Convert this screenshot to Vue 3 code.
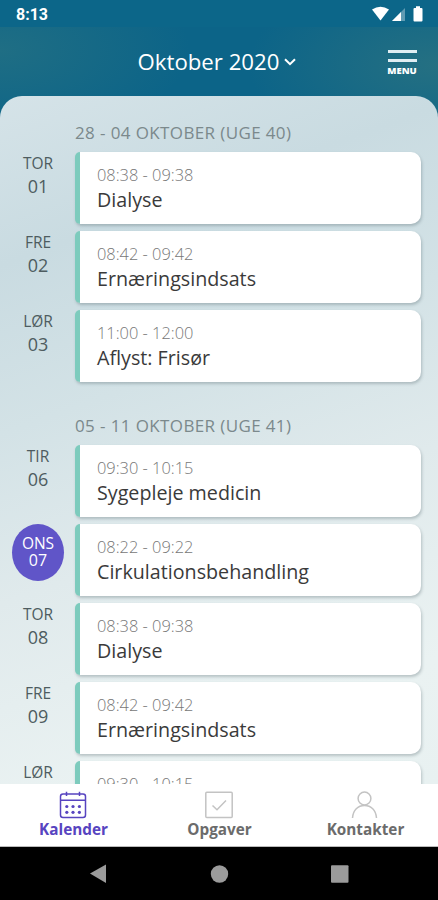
<script setup>
const weeks = [
  {
    title: '28 - 04 OKTOBER (UGE 40)',
    events: [
      { day: 'TOR', date: '01', time: '08:38 - 09:38', name: 'Dialyse' },
      { day: 'FRE', date: '02', time: '08:42 - 09:42', name: 'Ernæringsindsats' },
      { day: 'LØR', date: '03', time: '11:00 - 12:00', name: 'Aflyst: Frisør' }
    ]
  },
  {
    title: '05 - 11 OKTOBER (UGE 41)',
    events: [
      { day: 'TIR', date: '06', time: '09:30 - 10:15', name: 'Sygepleje medicin' },
      { day: 'ONS', date: '07', time: '08:22 - 09:22', name: 'Cirkulationsbehandling', today: true },
      { day: 'TOR', date: '08', time: '08:38 - 09:38', name: 'Dialyse' },
      { day: 'FRE', date: '09', time: '08:42 - 09:42', name: 'Ernæringsindsats' },
      { day: 'LØR', date: '10', time: '09:30 - 10:15', name: 'Sygepleje medicin' }
    ]
  }
]
</script>

<template>
  <div class="screen">
    <div class="status">
      <span class="clock">8:13</span>
      <svg class="status-icons" width="54" height="18" viewBox="0 0 54 18">
        <path d="M2 4.500Q10.500-.8 19 4.500L10.500 15.500Z" fill="#fff" />
        <path d="M22 16L35 3V16Z" fill="#fff" fill-opacity=".35" />
        <path d="M22 16L31 7V16Z" fill="#fff" />
        <path d="M44.500 3h1.500V1.200h4V3H51.500q1 0 1 1V15.500q0 1-1 1h-7q-1 0-1-1V4q0-1 1-1Z" fill="#fff" />
      </svg>
    </div>
    <header class="header">
      <div class="month">
        <span>Oktober 2020</span>
        <svg width="12" height="8" viewBox="0 0 12 8" fill="none" stroke="#fff" stroke-width="2"><path d="M1 1.200L6 6.200L11 1.200" /></svg>
      </div>
      <div class="menu">
        <i></i><i></i>
        <span>MENU</span>
      </div>
    </header>
    <main class="panel">
      <section v-for="week in weeks" :key="week.title" class="week">
        <h2>{{ week.title }}</h2>
        <div v-for="e in week.events" :key="e.date" class="row">
          <div class="day" :class="{ today: e.today }">
            <span class="dow">{{ e.day }}</span>
            <span class="num">{{ e.date }}</span>
          </div>
          <article class="card">
            <span class="time">{{ e.time }}</span>
            <span class="name">{{ e.name }}</span>
          </article>
        </div>
      </section>
    </main>
    <nav class="tabs">
      <div class="tab active">
        <svg width="28" height="28" viewBox="0 0 28 28" fill="none" stroke="currentColor" stroke-width="1.500">
          <rect x="1.500" y="3" width="25" height="23.500" rx="2.500" />
          <path d="M1.500 9.200H26.500M7.500 .8V5M20.500 .8V5" />
          <g fill="currentColor" stroke="none">
            <circle cx="7.800" cy="15.500" r="1.600" /><circle cx="14" cy="15.500" r="1.600" /><circle cx="20.400" cy="15.500" r="1.600" />
            <circle cx="7.800" cy="21.300" r="1.600" /><circle cx="14" cy="21.300" r="1.600" /><circle cx="20.400" cy="21.300" r="1.600" />
          </g>
        </svg>
        <span>Kalender</span>
      </div>
      <div class="tab">
        <svg width="28" height="28" viewBox="0 0 28 28" fill="none" stroke="#c3c3c3" stroke-width="1.500">
          <rect x=".8" y="1.200" width="26.400" height="25.300" rx="1" />
          <path d="M7.500 14.500L12 18.800L21 9.500" />
        </svg>
        <span>Opgaver</span>
      </div>
      <div class="tab">
        <svg width="28" height="28" viewBox="0 0 28 28" fill="none" stroke="#c3c3c3" stroke-width="1.500">
          <circle cx="13.500" cy="7.500" r="6.400" />
          <path d="M1.500 27C2 19 7 14.500 13.500 14.500S25 19 25.500 27" />
        </svg>
        <span>Kontakter</span>
      </div>
    </nav>
    <div class="system">
      <svg viewBox="0 0 438 53" width="438" height="53" fill="#9b9b9b">
        <path d="M90 26.500L106 17.500V36Z" />
        <circle cx="219.500" cy="27" r="8.700" />
        <rect x="331" y="18.300" width="17.500" height="17.500" rx="1" />
      </svg>
    </div>
  </div>
</template>

<style>
body { margin: 0; }
</style>

<style scoped>
.screen {
  width: 438px;
  height: 900px;
  display: flex;
  flex-direction: column;
  overflow: hidden;
  font-family: "Open Sans", sans-serif;
  background: radial-gradient(ellipse 190px 90px at 0 50px, #1f6e84, rgba(31, 110, 132, 0)), radial-gradient(ellipse 190px 90px at 438px 65px, #257082, rgba(37, 112, 130, 0)), #0c6488;
}
.status {
  height: 27px;
  flex: none;
  box-sizing: border-box;
  padding: 0 14px 0 16px;
  display: flex;
  justify-content: space-between;
  align-items: center;
  background: #0c6689;
  color: #fff;
}
.clock { font: 700 16px/28px Roboto, sans-serif; padding-top: 2px; }
.status-icons { margin-top: 1px; }
.header {
  height: 68.500px;
  flex: none;
  display: grid;
  grid-template-columns: 1fr auto 1fr;
  align-items: center;
  color: #fff;
}
.month {
  grid-column: 2;
  display: flex;
  align-items: center;
  gap: 5px;
  padding: 2px 4px 0 0;
  font-size: 22.200px;
  line-height: 30px;
}
.menu {
  justify-self: end;
  margin: 4px 21px 0 0;
  width: 30px;
  display: flex;
  flex-direction: column;
  align-items: center;
}
.menu i { width: 29px; height: 2.500px; margin-bottom: 6.500px; background: #e0eef3; }
.menu i + i { margin-bottom: 3px; }
.menu span { font-size: 9.500px; line-height: 12px; font-weight: 800; }
.panel {
  flex: 1;
  min-height: 0;
  overflow: hidden;
  border-radius: 22px 22px 0 0;
  padding: 24.500px 17px 0 0;
  background: linear-gradient(160deg, #d5e3e8 0, #c9dbe1 20%, #d3e2e6 40%, #e0eaec 60%, #eaf2f2 85%, #e8f1f1 100%);
}
.week { display: flex; flex-direction: column; gap: 7px; margin-bottom: 31px; }
h2 {
  margin: 0 0 0 75px;
  font-size: 17px;
  letter-spacing: .38px;
  line-height: 25px;
  font-weight: 400;
  color: #7b898c;
  white-space: nowrap;
}
.row { display: flex; height: 72px; }
.day {
  width: 52px;
  height: 57px;
  margin: 0 12px;
  display: flex;
  flex-direction: column;
  align-items: center;
  color: #4e5c60;
  flex: none;
}
.dow { font-size: 15.500px; line-height: 22px; }
.num { font-size: 18px; line-height: 24px; }
.today {
  box-sizing: border-box;
  border-radius: 50%;
  padding-top: 9.500px;
  background: #6055c8;
  color: #fff;
}
.today .dow { line-height: 18px; }
.today .num { font-size: 16px; line-height: 16px; }
.card {
  flex: 1;
  margin-left: -1px;
  box-sizing: border-box;
  border-left: 5px solid #7dcbbd;
  border-radius: 5px 10px 10px 5px;
  padding: 12px 0 0 17px;
  background: #fff;
  box-shadow: 1px 2px 3px rgba(70, 90, 95, .3);
  display: flex;
  flex-direction: column;
}
.time { font-size: 16.400px; line-height: 22px; font-weight: 300; color: #777; }
.name { font-size: 19.700px; line-height: 28px; color: #3a3a3a; }
.tabs {
  height: 63px;
  flex: none;
  display: grid;
  grid-template-columns: repeat(3, 146px);
  background: #fff;
  box-sizing: border-box;
  border-bottom: 1px solid #bbb;
}
.tab {
  display: flex;
  flex-direction: column;
  align-items: center;
  padding-top: 7px;
  color: #6b6b6b;
}
.tab span { font-size: 15.300px; line-height: 21px; font-weight: 700; margin-left: 1px; }
.active { color: #5744c0; }
.system { height: 53px; flex: none; background: #000; }
.system svg { display: block; }
</style>
